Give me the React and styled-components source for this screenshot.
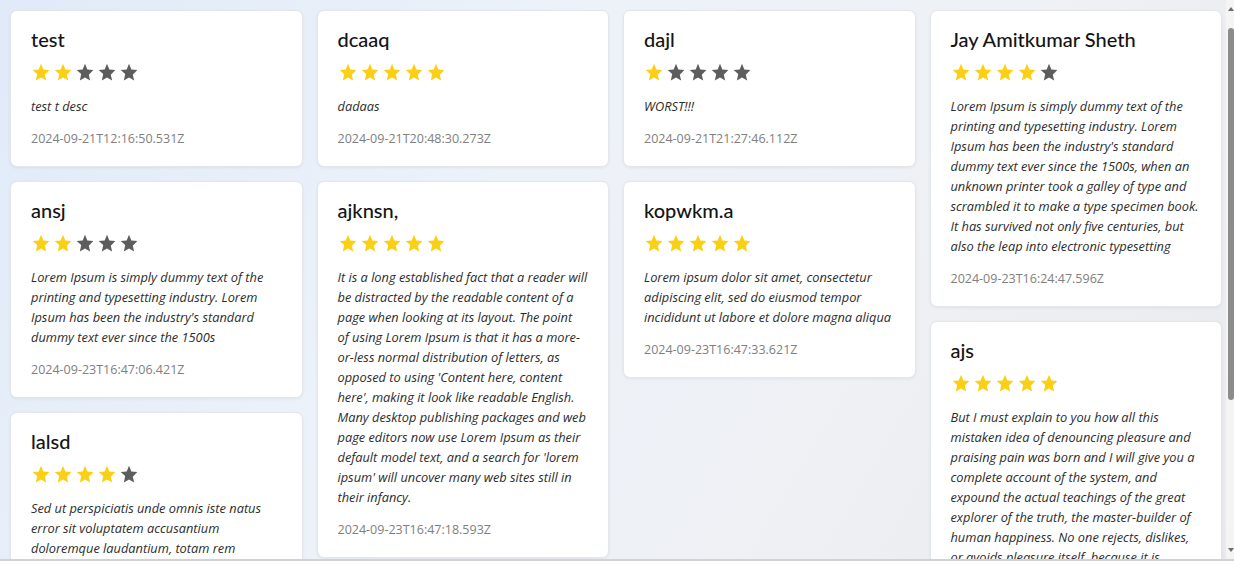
import React from "react";
import styled, { createGlobalStyle } from "styled-components";

const GlobalStyle = createGlobalStyle`
  html, body { margin: 0; padding: 0; background: #ffffff; }
  body { font-family: "Open Sans", "Noto Sans", sans-serif; }
  * { box-sizing: border-box; }
`;

const reviews = [
  { name: "test", rating: 2, text: "test t desc", date: "2024-09-21T12:16:50.531Z" },
  { name: "dcaaq", rating: 5, text: "dadaas", date: "2024-09-21T20:48:30.273Z" },
  { name: "dajl", rating: 1, text: "WORST!!!", date: "2024-09-21T21:27:46.112Z" },
  {
    name: "Jay Amitkumar Sheth",
    rating: 4,
    text: "Lorem Ipsum is simply dummy text of the printing and typesetting industry. Lorem Ipsum has been the industry's standard dummy text ever since the 1500s, when an unknown printer took a galley of type and scrambled it to make a type specimen book. It has survived not only five centuries, but also the leap into electronic typesetting",
    date: "2024-09-23T16:24:47.596Z",
  },
  {
    name: "ansj",
    rating: 2,
    text: "Lorem Ipsum is simply dummy text of the printing and typesetting industry. Lorem Ipsum has been the industry's standard dummy text ever since the 1500s",
    date: "2024-09-23T16:47:06.421Z",
  },
  {
    name: "ajknsn,",
    rating: 5,
    text: "It is a long established fact that a reader will be distracted by the readable content of a page when looking at its layout. The point of\u00a0using Lorem Ipsum is that it has a more-or-less normal distribution of letters, as opposed to using 'Content here, content here', making it look like readable English. Many desktop publishing packages and web page editors now use Lorem Ipsum as their default model text, and a search for 'lorem ipsum' will uncover many web sites still in their infancy.",
    date: "2024-09-23T16:47:18.593Z",
  },
  {
    name: "kopwkm.a",
    rating: 5,
    text: "Lorem ipsum dolor sit amet, consectetur adipiscing elit, sed do eiusmod tempor incididunt ut labore et dolore magna aliqua",
    date: "2024-09-23T16:47:33.621Z",
  },
  {
    name: "ajs",
    rating: 5,
    text: "But I must explain to you how all this mistaken idea of denouncing pleasure and praising pain was born and I will give you a complete account of the system, and expound the actual teachings of the great explorer of the truth, the master-builder of human happiness. No one rejects, dislikes, or avoids pleasure itself, because it is pleasure, but because those who do not know how to pursue pleasure rationally encounter consequences that are extremely painful.",
    date: "2024-09-23T16:48:12.904Z",
  },
  {
    name: "lalsd",
    rating: 4,
    text: "Sed ut perspiciatis unde omnis iste natus error sit voluptatem accusantium doloremque laudantium, totam rem aperiam, eaque ipsa quae ab illo inventore veritatis et quasi architecto beatae vitae dicta sunt explicabo.",
    date: "2024-09-23T16:48:01.318Z",
  },
];

const Frame = styled.div`
  display: flex;
  height: 561px;
  border-bottom: 2px solid #d2d2d2;
  background: linear-gradient(120deg, #e0eaf8 0%, #edf2f9 38%, #eef0f4 70%, #e8eaed 100%);
`;

const Scroller = styled.div`
  flex: 1 1 auto;
  min-width: 0;
  overflow: hidden;
`;

const ScrollTrack = styled.div`
  flex: 0 0 8px;
  display: flex;
  flex-direction: column;
  align-items: flex-end;
  background: #f4f4f4;
`;

const ScrollArrow = styled.div`
  flex: none;
  width: 6px;
  height: 18px;
  display: flex;
  align-items: center;
  justify-content: center;
  &::before {
    content: "";
    border-left: 3px solid transparent;
    border-right: 3px solid transparent;
    ${(p) =>
      p.$down ? "border-top: 4px solid #6d6d6d;" : "border-bottom: 4px solid #6d6d6d;"}
  }
`;

const ScrollThumb = styled.div`
  flex: none;
  width: 6px;
  height: 372px;
  margin-top: 10px;
  border-radius: 3px;
  background: #8c8c8c;
`;

const ScrollGap = styled.div`
  flex: 1 1 auto;
`;

const Masonry = styled.div`
  display: flex;
  align-items: flex-start;
  gap: 14px;
  padding: 10px 4px 14px 10px;
`;

const Column = styled.div`
  flex: 1 1 0;
  min-width: 0;
  display: flex;
  flex-direction: column;
  gap: 14px;
`;

const Card = styled.article`
  background: #ffffff;
  border: 1px solid #e3e6ea;
  border-radius: 7px;
  box-shadow: 0 1px 3px rgba(0, 0, 0, 0.06);
  padding: 15px 20px 17px;
`;

const Name = styled.h3`
  margin: 0;
  font-family: "Lato", sans-serif;
  font-size: 20px;
  font-weight: 500;
  line-height: 26px;
  color: #141414;
`;

const Stars = styled.div`
  display: flex;
  gap: 2px;
  margin-top: 11px;
`;

const StarSvg = styled.svg`
  width: 20px;
  height: 20px;
  fill: ${(p) => (p.$on ? "#fbd014" : "#5d5d5d")};
`;

const Text = styled.p`
  margin: 13px 0 0;
  font-family: "Open Sans", sans-serif;
  font-style: italic;
  font-size: 12.8px;
  line-height: 20px;
  color: #2c2c2c;
`;

const DateLine = styled.div`
  margin-top: 13px;
  font-family: "Open Sans", sans-serif;
  font-size: 12.5px;
  line-height: 20px;
  color: #808080;
`;

const Star = ({ on }) => (
  <StarSvg $on={on} viewBox="0 0 24 24">
    <path d="M12 17.27L18.18 21l-1.64-7.03L22 8.46l-7.19-.61L12 1 9.19 7.850 2 8.46l5.46 4.73L5.82 21z" />
  </StarSvg>
);

const ReviewCard = ({ r }) => (
  <Card>
    <Name>{r.name}</Name>
    <Stars>
      {[1, 2, 3, 4, 5].map((i) => (
        <Star key={i} on={i <= r.rating} />
      ))}
    </Stars>
    <Text>{r.text}</Text>
    <DateLine>{r.date}</DateLine>
  </Card>
);

export default function App() {
  const cols = [[], [], [], []];
  reviews.forEach((r, i) => cols[i % 4].push(r));
  return (
    <>
      <GlobalStyle />
      <Frame>
        <Scroller>
          <Masonry>
            {cols.map((c, ci) => (
              <Column key={ci}>
                {c.map((r) => (
                  <ReviewCard key={r.name} r={r} />
                ))}
              </Column>
            ))}
          </Masonry>
        </Scroller>
        <ScrollTrack>
          <ScrollArrow />
          <ScrollThumb />
          <ScrollGap />
          <ScrollArrow $down />
        </ScrollTrack>
      </Frame>
    </>
  );
}
